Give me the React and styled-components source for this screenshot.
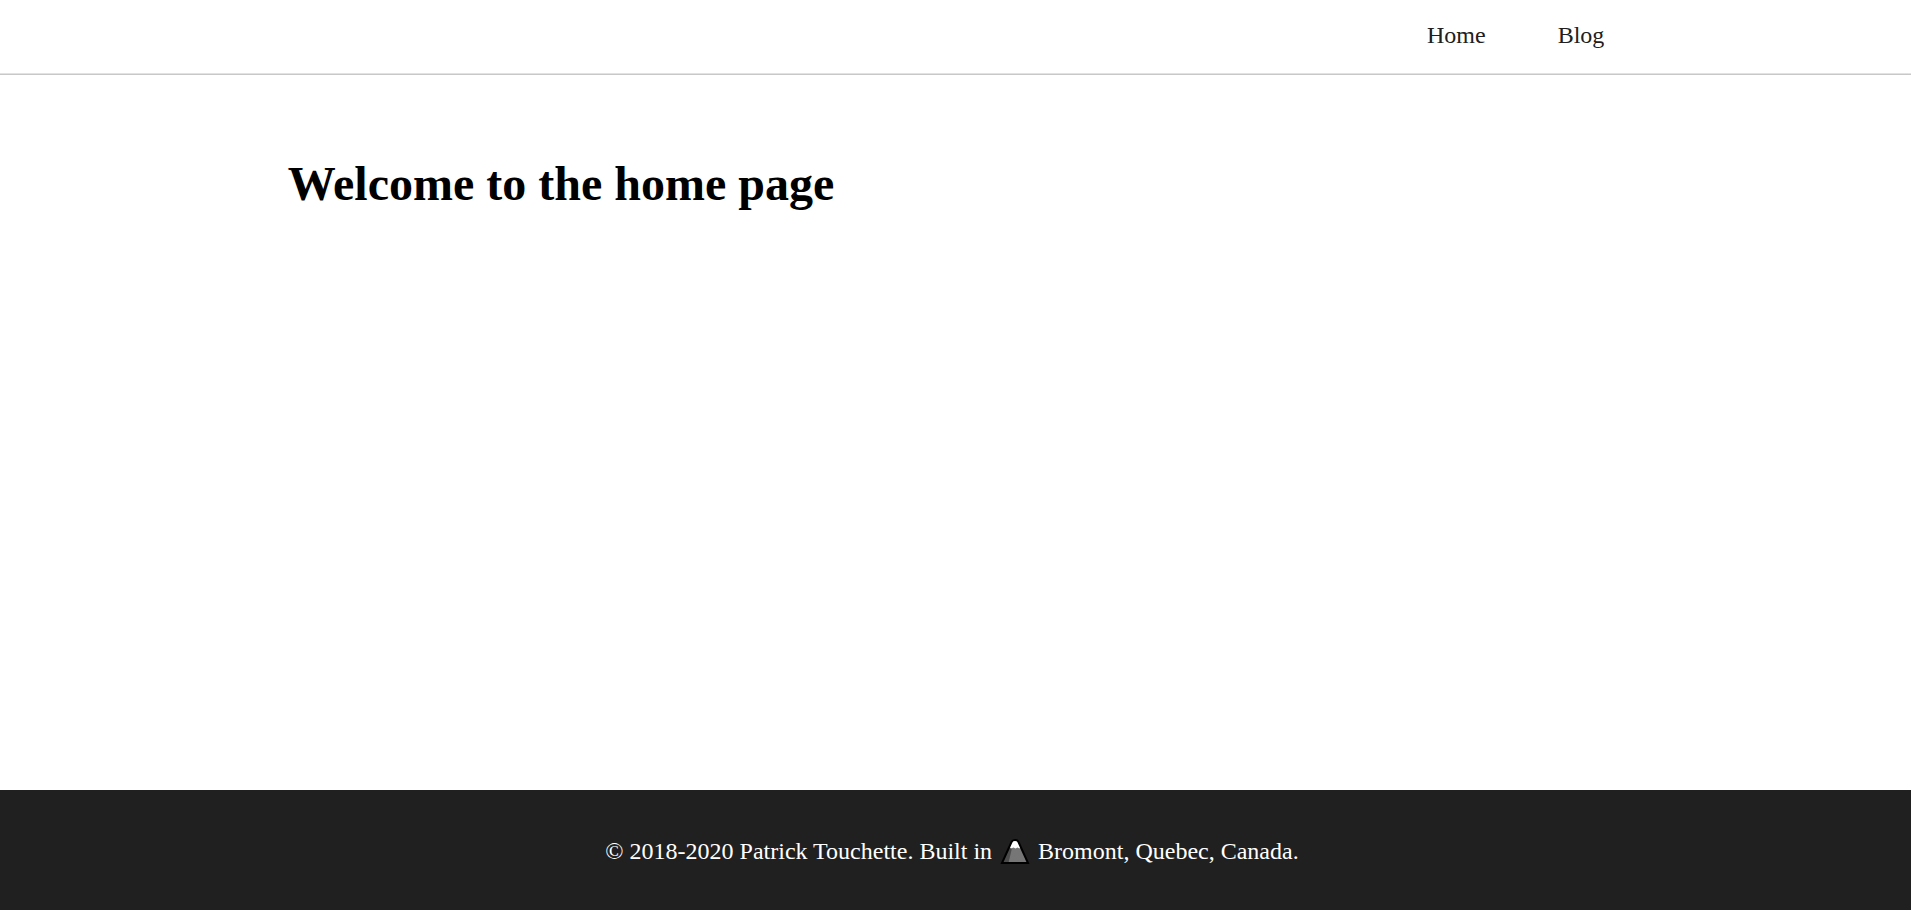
import React from "react";
import styled, { createGlobalStyle } from "styled-components";

const GlobalStyle = createGlobalStyle`
  *, *::before, *::after { box-sizing: border-box; }
  body {
    margin: 0;
    background: #fff;
    color: #000;
    font-family: "Liberation Serif", "Times New Roman", serif;
    font-size: 24px;
    line-height: 36px;
  }
`;

const Page = styled.div`
  display: flex;
  flex-direction: column;
  min-height: 100vh;
`;

const Header = styled.header`
  border-bottom: 1px solid #c8c8c8;
  box-shadow: inset 0 -1px 0 #e2e2e2;
`;

const Nav = styled.nav`
  display: flex;
  justify-content: flex-end;
  gap: 72px;
  width: 70%;
  margin: 0 auto;
  padding: 17px 20px 21px;
`;

const NavLink = styled.a`
  color: #202020;
  text-decoration: none;
`;

const Main = styled.main`
  flex: 1;
  width: 70%;
  margin: 0 auto;
  padding: 73px 1px;
`;

const Title = styled.h1`
  margin: 0;
  font-size: 48px;
  line-height: 72px;
`;

const Footer = styled.footer`
  padding: 43px 30px 41px 23px;
  background: #202020;
  color: #fff;
  text-align: center;
`;

const Copyright = styled.p`
  margin: 0;
`;

const Mountain = styled.svg`
  width: 34px;
  height: 26px;
  vertical-align: -6px;
`;

export default function App() {
  return (
    <Page>
      <GlobalStyle />
      <Header>
        <Nav aria-label="Main">
          <NavLink href="/">Home</NavLink>
          <NavLink href="/blog">Blog</NavLink>
        </Nav>
      </Header>
      <Main>
        <Title>Welcome to the home page</Title>
      </Main>
      <Footer>
        <Copyright>
          © 2018-2020 Patrick Touchette. Built in{" "}
          <Mountain viewBox="0 0 34 26" role="img" aria-label="mountain">
            <path d="M4 24 L13.5 3 Q14.5 1 17 1 Q19.5 1 20.5 3 L30 24 Z" fill="#767676" />
            <path d="M4 24 L11 9 H14 L10.5 24 Z" fill="#4c4c4c" />
            <path d="M11.5 8 L13.5 3 Q14.5 1 17 1 Q19.5 1 20.5 3 L22.5 8 L21.5 9.5 L19.5 8.5 L17.5 9.5 L15.5 8.5 L13 9.5 Z" fill="#fff" />
            <path d="M4 24 L13.5 3 Q14.5 1 17 1 Q19.5 1 20.5 3 L30 24 Z" fill="none" stroke="#000" strokeWidth="2" />
          </Mountain>{" "}
          Bromont, Quebec, Canada.
        </Copyright>
      </Footer>
    </Page>
  );
}
